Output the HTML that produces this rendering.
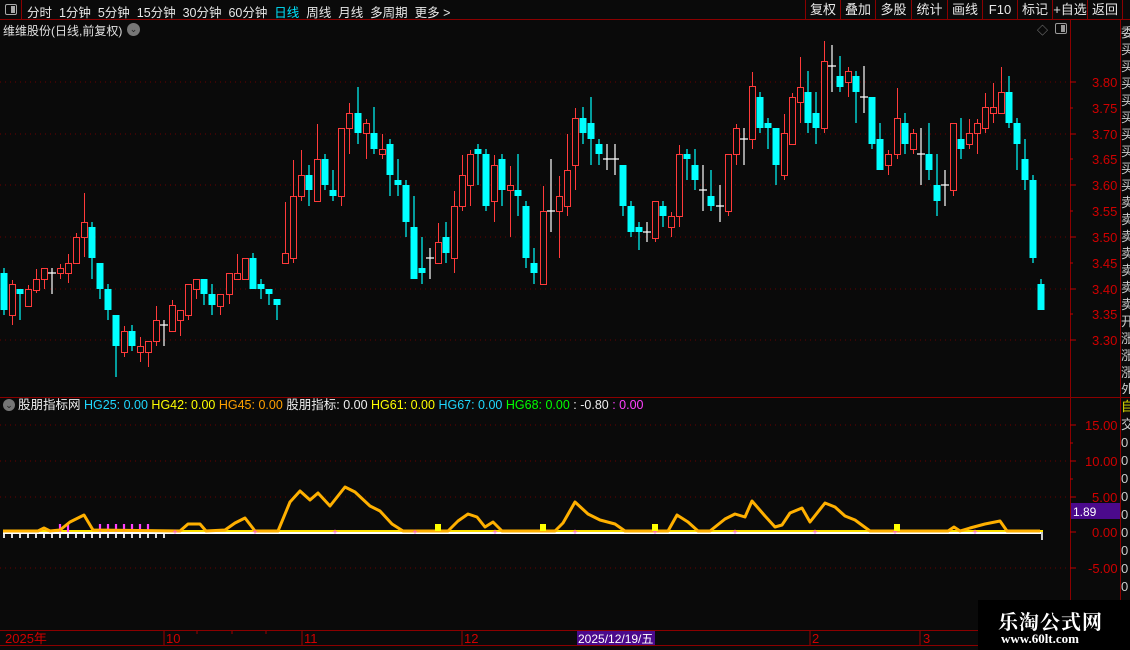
<!DOCTYPE html>
<html><head><meta charset="utf-8"><style>
*{margin:0;padding:0;box-sizing:border-box}
body{width:1130px;height:650px;overflow:hidden;background:#0a0a0a;font-family:"Liberation Sans","Noto Sans CJK SC",sans-serif;color:#ddd;font-size:12px;position:relative}
.a{position:absolute;white-space:nowrap}
</style></head><body>
<!-- top bar -->
<div class="a" style="left:0;top:0;width:1130px;height:20px;border-bottom:1px solid #8b0000"></div>
<div class="a" style="left:0;top:0;width:22px;height:20px;border-right:1px solid #8b0000"></div>
<div class="a" style="left:5px;top:4px;width:12px;height:11px;border:1px solid #aaa;border-radius:2px"><div style="position:absolute;right:1px;top:1px;width:4px;height:7px;background:#aaa"></div></div>
<div class="a" style="left:27px;top:2px;font-size:12.5px;color:#e8e8e8;word-spacing:0">分时&nbsp; 1分钟&nbsp; 5分钟&nbsp; 15分钟&nbsp; 30分钟&nbsp; 60分钟&nbsp; <span style="color:#00e5ff">日线</span>&nbsp; 周线&nbsp; 月线&nbsp; 多周期&nbsp; 更多 &gt;</div>
<div class="a" style="left:805px;top:0;height:20px;border-left:1px solid #8b0000;font-size:13px;color:#e8e8e8;display:flex">
<span style="width:35px;text-align:center;border-right:1px solid #8b0000;line-height:19px">复权</span><span style="width:35px;text-align:center;border-right:1px solid #8b0000;line-height:19px">叠加</span><span style="width:36px;text-align:center;border-right:1px solid #8b0000;line-height:19px">多股</span><span style="width:36px;text-align:center;border-right:1px solid #8b0000;line-height:19px">统计</span><span style="width:35px;text-align:center;border-right:1px solid #8b0000;line-height:19px">画线</span><span style="width:35px;text-align:center;border-right:1px solid #8b0000;line-height:19px">F10</span><span style="width:35px;text-align:center;border-right:1px solid #8b0000;line-height:19px">标记</span><span style="width:35px;text-align:center;border-right:1px solid #8b0000;line-height:19px">+自选</span><span style="width:35px;text-align:center;border-right:1px solid #8b0000;line-height:19px">返回</span></div>
<div class="a" style="left:3px;top:22px;font-size:12px;color:#e0e0e0">维维股份(日线,前复权)</div>
<div class="a" style="left:127px;top:23px;width:13px;height:13px;border-radius:50%;background:#777;color:#222;font-size:9px;text-align:center;line-height:13px">⌄</div>
<div class="a" style="left:1037px;top:22px;color:#888;font-size:11px">◇</div>
<div class="a" style="left:1055px;top:23px;width:12px;height:11px;border:1px solid #999;border-radius:2px"><div style="position:absolute;right:1px;top:1px;width:4px;height:7px;background:#999"></div></div>
<!-- right lines -->
<div class="a" style="left:1070px;top:20px;width:1px;height:610px;background:#8b0000"></div>
<div class="a" style="left:1120px;top:20px;width:1px;height:610px;background:#8b0000"></div>
<div class="a" style="left:1121px;top:24px;width:9px;height:370px;overflow:hidden;color:#ccc;font-size:13px;line-height:17px;white-space:normal;word-break:break-all">委买买买买买买买买买卖卖卖卖卖卖卖开涨涨涨外量涨涨外</div>
<div class="a" style="left:1121px;top:398px;width:9px;height:230px;overflow:hidden;font-size:13px;line-height:18px;white-space:normal;word-break:break-all"><span style="color:#dd0">自</span><span style="color:#ccc">交000000000</span></div>
<div class="a" style="left:0;top:397px;width:1130px;height:1px;background:#8b0000"></div>
<div class="a" style="left:0;top:630px;width:1130px;height:1px;background:#8b0000"></div>
<div class="a" style="left:0;top:645px;width:1130px;height:1px;background:#8b0000"></div>

<svg class="a" style="left:0;top:0" width="1130" height="650">
<g stroke="#6a0000" stroke-dasharray="1,4">
<path d="M0 82H1070M0 134H1070M0 185H1070M0 237H1070M0 289H1070M0 340H1070"/>
<path d="M0 425H1070M0 461H1070M0 497H1070M0 568H1070"/>
</g>
<g stroke="#c00000"><path d="M1070 82h6M1070 108h3M1070 134h6M1070 159h3M1070 185h6M1070 211h3M1070 237h6M1070 263h3M1070 289h6M1070 314h3M1070 340h6M1070 425h6M1070 443h3M1070 461h6M1070 479h3M1070 497h6M1070 532h6M1070 568h6"/></g>
<g fill="#d00000" font-size="13" font-family="Liberation Sans,sans-serif">
<text x="1092" y="87">3.80</text><text x="1092" y="113">3.75</text><text x="1092" y="139">3.70</text><text x="1092" y="164">3.65</text><text x="1092" y="190">3.60</text><text x="1092" y="216">3.55</text><text x="1092" y="242">3.50</text><text x="1092" y="268">3.45</text><text x="1092" y="294">3.40</text><text x="1092" y="319">3.35</text><text x="1092" y="345">3.30</text>
<text x="1085" y="430">15.00</text><text x="1085" y="466">10.00</text><text x="1092" y="502">5.00</text><text x="1092" y="537">0.00</text><text x="1088" y="573">-5.00</text>
</g>
<rect x="1071" y="503" width="49" height="16" fill="#4b0a8c"/>
<text x="1073" y="516" fill="#fff" font-size="12" font-family="Liberation Sans,sans-serif">1.89</text>

<!-- red candles -->
<g stroke="#ff3a3a" stroke-width="1" fill="#0a0a0a" shape-rendering="crispEdges">
<path d="M12.5 280V325M28.5 285V306M36.5 269V293M44.5 268V289M60.5 264V279M68.5 254V283M76.5 233V263M84.5 193V257M124.5 326V357M140.5 337V362M148.5 341V367M156.5 306V346M172.5 300V331M180.5 310V336M188.5 284V320M196.5 279V299M220.5 294V315M229.5 273V304M237.5 254V279M245.5 258V279M285.5 202V263M293.5 160V263M301.5 150V201M317.5 124V201M341.5 128V206M349.5 103V154M366.5 119V159M382.5 134V159M438.5 223V263M454.5 191V273M462.5 155V211M470.5 150V206M494.5 155V222M510.5 166V237M543.5 186V284M559.5 176V258M567.5 134V216M575.5 108V190M655.5 201V242M671.5 212V237M679.5 145V227M728.5 154V216M736.5 124V165M752.5 72V149M784.5 114V180M792.5 93V144M800.5 57V123M824.5 41V133M848.5 67V97M888.5 150V175M897.5 88V159M913.5 129V154M953.5 123V196M969.5 119V149M977.5 119V154M985.5 93V133M993.5 83V123M1001.5 67V113"/>
<g transform="translate(0.5,0.5)">
<rect x="9" y="284" width="6" height="31"/><rect x="25" y="289" width="6" height="17"/><rect x="33" y="279" width="6" height="11"/><rect x="41" y="268" width="6" height="11"/><rect x="57" y="268" width="6" height="5"/><rect x="65" y="263" width="6" height="10"/><rect x="73" y="237" width="6" height="26"/><rect x="81" y="222" width="6" height="15"/><rect x="121" y="331" width="6" height="21"/><rect x="137" y="346" width="6" height="6"/><rect x="145" y="341" width="6" height="11"/><rect x="153" y="320" width="6" height="21"/><rect x="169" y="305" width="6" height="26"/><rect x="177" y="310" width="6" height="10"/><rect x="185" y="284" width="6" height="31"/><rect x="193" y="279" width="6" height="10"/><rect x="217" y="294" width="6" height="12"/><rect x="226" y="273" width="6" height="21"/><rect x="234" y="273" width="6" height="6"/><rect x="242" y="258" width="6" height="21"/><rect x="282" y="253" width="6" height="10"/><rect x="290" y="196" width="6" height="62"/><rect x="298" y="175" width="6" height="21"/><rect x="314" y="159" width="6" height="42"/><rect x="338" y="128" width="6" height="68"/><rect x="346" y="113" width="6" height="15"/><rect x="363" y="123" width="6" height="10"/><rect x="379" y="149" width="6" height="5"/><rect x="435" y="242" width="6" height="21"/><rect x="451" y="206" width="6" height="52"/><rect x="459" y="175" width="6" height="31"/><rect x="467" y="154" width="6" height="31"/><rect x="491" y="165" width="6" height="36"/><rect x="507" y="185" width="6" height="5"/><rect x="540" y="211" width="6" height="73"/><rect x="556" y="196" width="6" height="15"/><rect x="564" y="170" width="6" height="36"/><rect x="572" y="118" width="6" height="47"/><rect x="652" y="201" width="6" height="37"/><rect x="668" y="216" width="6" height="11"/><rect x="676" y="154" width="6" height="62"/><rect x="725" y="154" width="6" height="57"/><rect x="733" y="128" width="6" height="26"/><rect x="749" y="86" width="6" height="53"/><rect x="781" y="133" width="6" height="42"/><rect x="789" y="97" width="6" height="47"/><rect x="797" y="87" width="6" height="15"/><rect x="821" y="61" width="6" height="67"/><rect x="845" y="71" width="6" height="11"/><rect x="885" y="154" width="6" height="11"/><rect x="894" y="118" width="6" height="36"/><rect x="910" y="133" width="6" height="16"/><rect x="950" y="123" width="6" height="67"/><rect x="966" y="133" width="6" height="11"/><rect x="974" y="123" width="6" height="10"/><rect x="982" y="107" width="6" height="21"/><rect x="990" y="107" width="6" height="6"/><rect x="998" y="92" width="6" height="21"/>
</g></g>
<!-- cyan candles -->
<g fill="#00ffff" stroke="#00ffff" stroke-width="1.2">
<path d="M4 268V315M20 289V320M92 222V279M100 263V299M108 284V320M116 315V377M132 325V351M204 279V305M212 284V315M253 253V289M261 279V299M269 289V305M277 299V320M309 165V206M325 154V190M333 170V201M358 87V144M374 107V154M390 139V196M398 159V196M406 180V237M414 196V279M422 237V284M446 222V263M478 144V185M486 149V211M502 154V206M518 154V216M526 201V268M534 248V284M583 107V144M591 97V165M599 139V165M623 165V216M631 201V237M639 222V250M663 201V227M687 149V180M695 149V190M711 170V211M760 92V133M768 118V149M776 128V185M808 71V133M816 92V144M840 56V92M856 71V123M872 97V149M880 123V170M905 113V154M929 123V180M937 154V216M961 118V159M1009 76V128M1017 118V170M1025 139V190M1033 175V263M1041 279V310"/>
<g stroke="none">
<rect x="0.5" y="273" width="7" height="37"/><rect x="16.5" y="289" width="7" height="5"/><rect x="88.5" y="227" width="7" height="31"/><rect x="96.5" y="263" width="7" height="26"/><rect x="104.5" y="289" width="7" height="21"/><rect x="112.5" y="315" width="7" height="31"/><rect x="128.5" y="331" width="7" height="15"/><rect x="200.5" y="279" width="7" height="15"/><rect x="208.5" y="294" width="7" height="11"/><rect x="249.5" y="258" width="7" height="31"/><rect x="257.5" y="284" width="7" height="5"/><rect x="265.5" y="289" width="7" height="5"/><rect x="273.5" y="299" width="7" height="6"/><rect x="305.5" y="175" width="7" height="15"/><rect x="321.5" y="159" width="7" height="26"/><rect x="329.5" y="190" width="7" height="6"/><rect x="354.5" y="113" width="7" height="20"/><rect x="370.5" y="133" width="7" height="16"/><rect x="386.5" y="144" width="7" height="31"/><rect x="394.5" y="180" width="7" height="5"/><rect x="402.5" y="185" width="7" height="37"/><rect x="410.5" y="227" width="7" height="52"/><rect x="418.5" y="268" width="7" height="5"/><rect x="442.5" y="237" width="7" height="16"/><rect x="474.5" y="149" width="7" height="5"/><rect x="482.5" y="154" width="7" height="52"/><rect x="498.5" y="159" width="7" height="31"/><rect x="514.5" y="190" width="7" height="6"/><rect x="522.5" y="206" width="7" height="52"/><rect x="530.5" y="263" width="7" height="10"/><rect x="579.5" y="118" width="7" height="15"/><rect x="587.5" y="123" width="7" height="16"/><rect x="595.5" y="144" width="7" height="10"/><rect x="619.5" y="165" width="7" height="41"/><rect x="627.5" y="206" width="7" height="26"/><rect x="635.5" y="227" width="7" height="5"/><rect x="659.5" y="206" width="7" height="10"/><rect x="683.5" y="154" width="7" height="5"/><rect x="691.5" y="165" width="7" height="15"/><rect x="707.5" y="196" width="7" height="10"/><rect x="756.5" y="97" width="7" height="31"/><rect x="764.5" y="123" width="7" height="5"/><rect x="772.5" y="128" width="7" height="37"/><rect x="804.5" y="92" width="7" height="31"/><rect x="812.5" y="113" width="7" height="15"/><rect x="836.5" y="76" width="7" height="11"/><rect x="852.5" y="76" width="7" height="16"/><rect x="868.5" y="97" width="7" height="47"/><rect x="876.5" y="139" width="7" height="31"/><rect x="901.5" y="123" width="7" height="21"/><rect x="925.5" y="154" width="7" height="16"/><rect x="933.5" y="185" width="7" height="16"/><rect x="957.5" y="139" width="7" height="10"/><rect x="1005.5" y="92" width="7" height="31"/><rect x="1013.5" y="123" width="7" height="21"/><rect x="1021.5" y="159" width="7" height="21"/><rect x="1029.5" y="180" width="7" height="78"/><rect x="1037.5" y="284" width="7" height="26"/>
</g></g>
<!-- crosses -->
<g stroke="#fff" stroke-width="1.2">
<path d="M52 268V294M48 273h8M164 320V346M160 325h8M430 248V279M426 258h8M551 159V232M547 211h8M607 144V170M603 159h8M615 144V175M611 159h8M647 222V242M643 232h8M703 165V211M699 190h8M720 185V222M716 206h8M744 128V165M740 139h8M832 45V92M828 66h8M864 66V113M860 97h8M921 128V185M917 154h8M945 170V206M941 185h8"/>
</g>

<!-- indicator -->
<g stroke="#ddd" stroke-width="2"><path d="M4 533v5M12 533v5M20 533v5M28 533v5M36 533v5M44 533v5M52 533v5M60 533v5M68 533v5M76 533v5M84 533v5M92 533v5M100 533v5M108 533v5M116 533v5M124 533v5M132 533v5M140 533v5M148 533v5M156 533v5M164 533v5"/></g>
<rect x="3" y="532" width="1040" height="2" fill="#fff"/>
<rect x="3" y="530" width="1040" height="2" fill="#ffe000"/>
<rect x="1041" y="532" width="2" height="8" fill="#ccc"/>
<g stroke="#ff40ff" stroke-width="2.2"><path d="M60 524v8M68 524v8M100 524v8M108 524v8M116 524v8M124 524v8M132 524v8M140 524v8M148 524v8"/></g>
<polyline fill="none" stroke="#ffb000" stroke-width="3" stroke-linejoin="round" points="3,531 38,531 44,528 50,531 60,530 70,522 84,515 93,530 180,531 188,524 200,524 206,531 225,530 235,523 245,518 255,531 278,531 290,502 300,491 310,500 318,493 330,506 345,487 355,492 370,506 380,511 392,524 403,531 448,531 458,521 468,514 477,517 485,527 493,522 502,531 555,531 563,523 575,502 588,514 600,520 615,524 625,531 668,531 677,515 688,522 698,531 710,531 725,519 735,514 745,517 752,501 765,516 775,527 782,525 790,513 802,508 810,522 825,503 835,507 845,516 855,520 870,531 948,531 954,527 960,531 970,528 985,524 1000,521 1007,531 1040,531"/>
<g fill="#ff40ff" font-size="9" font-family="Liberation Sans,sans-serif" text-anchor="middle">
<text x="175" y="535">+</text><text x="255" y="535">+</text><text x="335" y="535">+</text><text x="415" y="535">+</text><text x="495" y="535">+</text><text x="575" y="535">+</text><text x="655" y="535">+</text><text x="735" y="535">+</text><text x="815" y="535">+</text><text x="895" y="535">+</text><text x="975" y="535">+</text>
</g>
<g fill="#ffff00"><rect x="435" y="524" width="6" height="7"/><rect x="540" y="524" width="6" height="7"/><rect x="652" y="524" width="6" height="7"/><rect x="894" y="524" width="6" height="7"/></g>

<!-- bottom axis -->
<g stroke="#a00000"><path d="M164 631v14M302 631v14M462 631v14M810 631v14M920 631v14M197 631v3M232 631v3M266 631v3"/></g>
<g fill="#d00000" font-size="13" font-family="Liberation Sans,Noto Sans CJK SC,sans-serif">
<text x="5" y="643">2025年</text><text x="166" y="643">10</text><text x="304" y="643">11</text><text x="464" y="643">12</text><text x="812" y="643">2</text><text x="923" y="643">3</text>
</g>
<rect x="577" y="631" width="78" height="14" fill="#4b0a8c"/>
<text x="578" y="643" fill="#fff" font-size="12" font-family="Liberation Sans,Noto Sans CJK SC,sans-serif">2025/12/19/五</text>
</svg>

<!-- indicator header -->
<div class="a" style="left:3px;top:399px;width:12px;height:12px;border-radius:50%;background:#777;color:#222;font-size:9px;text-align:center;line-height:12px">⌄</div>
<div class="a" style="left:18px;top:397px;font-size:12.5px;line-height:16px"><span style="color:#eee">股朋指标网</span> <span style="color:#20d8ff">HG25: 0.00</span> <span style="color:#ffff00">HG42: 0.00</span> <span style="color:#ffa000">HG45: 0.00</span> <span style="color:#eee">股朋指标: 0.00</span> <span style="color:#ffff00">HG61: 0.00</span> <span style="color:#20d8ff">HG67: 0.00</span> <span style="color:#00ff00">HG68: 0.00</span> <span style="color:#eee">: -0.80</span> <span style="color:#ff40ff">: 0.00</span></div>

<!-- watermark -->
<div class="a" style="left:978px;top:600px;width:152px;height:50px;background:#000"></div>
<div class="a" style="left:998px;top:606px;font-family:'Noto Serif CJK SC','Liberation Serif',serif;font-weight:bold;font-size:20px;color:#fff;letter-spacing:1px">乐淘公式网</div>
<div class="a" style="left:1001px;top:631px;font-family:'Liberation Serif',serif;font-weight:bold;font-size:13px;color:#fff">www.60lt.com</div>
</body></html>
